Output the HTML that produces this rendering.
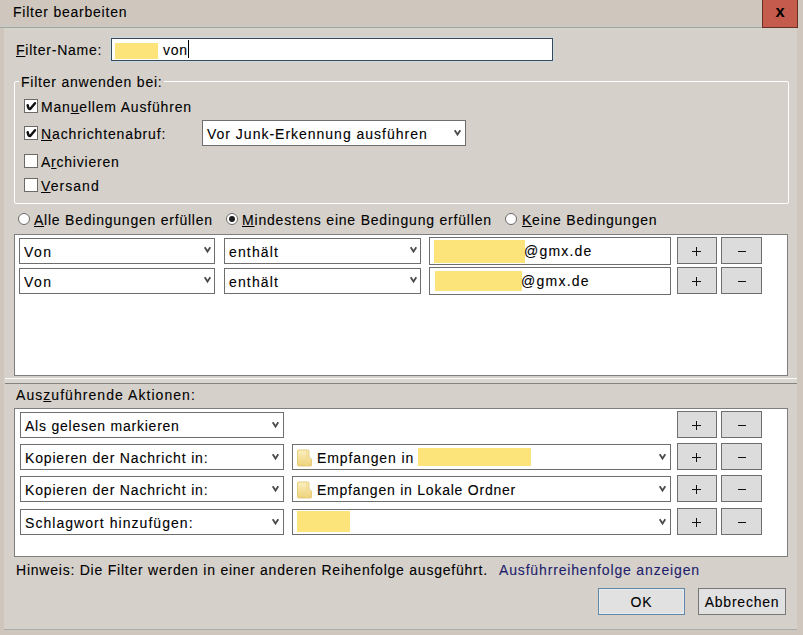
<!DOCTYPE html>
<html><head><meta charset="utf-8">
<style>
html,body{margin:0;padding:0}
body{width:803px;height:635px;position:relative;overflow:hidden;background:#cfc7bd;font-family:"Liberation Sans",sans-serif}
.a{position:absolute;box-sizing:border-box}
.t{position:absolute;font-size:14px;line-height:16px;letter-spacing:0.77px;color:#000;white-space:nowrap;-webkit-text-stroke:0.1px currentColor}
.u{text-decoration:underline;text-underline-offset:1px;text-decoration-thickness:1px}
.cb{position:absolute;width:14px;height:14px;box-sizing:border-box;border:1px solid #6d6a66;background:#fff}
.rd{position:absolute;width:12px;height:12px;box-sizing:border-box;border:1px solid #6a6a6a;border-radius:50%;background:#fff}
.ml{position:absolute;box-sizing:border-box;border:1px solid #6e6e6e;background:#fff;height:26px}
.tb{position:absolute;box-sizing:border-box;border:1px solid #6e6e6e;background:#fff;height:28px}
.bt{position:absolute;box-sizing:border-box;border:1px solid #6e6e6e;background:#dcdcdc;width:40px;height:27px}
.chev{position:absolute;width:10px;height:8px}
.yl{position:absolute;background:#fde47a}
.plus-h{position:absolute;left:14px;top:13px;width:9px;height:1px;background:#111}
.plus-v{position:absolute;left:18px;top:9px;width:1px;height:9px;background:#111}
.minus{position:absolute;left:16px;top:13px;width:8px;height:1px;background:#111}
</style></head><body>
<!-- content area -->
<div class="a" style="left:4px;top:28px;width:793px;height:601px;background:#d5d1ca"></div>
<div class="a" style="left:4px;top:629px;width:793px;height:1px;background:#a9adab"></div>
<!-- title -->
<div class="a" style="left:0;top:25px;width:762px;height:2px;background:#cac9c4"></div><div class="a" style="left:0;top:27px;width:762px;height:1px;background:#a4a6a2"></div><div class="a" style="left:4px;top:28px;width:758px;height:2px;background:#d6d3c8"></div>
<div class="t" style="left:13px;top:4px">Filter bearbeiten</div>
<div class="a" style="left:762px;top:0;width:36px;height:28px;background:#c45b4c;border:1px solid #6b2e26;border-top:none"></div>
<div class="a" style="left:773px;top:1px;width:14px;height:20px;font-size:16.5px;font-weight:bold;line-height:20px;color:#000;text-align:center">x</div>

<!-- filter name -->
<div class="t" style="left:16px;top:42px"><span class="u">F</span>ilter-Name:</div>
<div class="a" style="left:110px;top:37px;width:444px;height:25px;border:1px solid #c9d9e4"></div>
<div class="a" style="left:111px;top:38px;width:442px;height:23px;border:1px solid #3b4956;background:#fff"></div>
<div class="yl" style="left:115px;top:43px;width:43px;height:16px"></div>
<div class="t" style="left:163px;top:42px">von</div>
<div class="a" style="left:188px;top:40px;width:1px;height:18px;background:#000"></div>

<!-- groupbox -->
<div class="a" style="left:14px;top:81px;width:775px;height:123px;border:1px solid #fff;border-radius:2px"></div>
<div class="a" style="left:19px;top:78px;width:145px;height:6px;background:#d5d1ca"></div>
<div class="t" style="left:21px;top:74px">Filter anwenden bei:</div>

<div class="cb" style="left:24px;top:99px"></div>
<svg class="a" style="left:24px;top:99px" width="14" height="14" viewBox="0 0 14 14"><path d="M3.7 6.3 Q4.3 10.3 6.2 10.0 L11.0 4.3" fill="none" stroke="#111" stroke-width="2.5" stroke-linejoin="round" stroke-linecap="round"/></svg>
<div class="t" style="left:41px;top:99px;letter-spacing:0.81px">Man<span class="u">u</span>ellem Ausführen</div>

<div class="cb" style="left:24px;top:126px"></div>
<svg class="a" style="left:24px;top:126px" width="14" height="14" viewBox="0 0 14 14"><path d="M3.7 6.3 Q4.3 10.3 6.2 10.0 L11.0 4.3" fill="none" stroke="#111" stroke-width="2.5" stroke-linejoin="round" stroke-linecap="round"/></svg>
<div class="t" style="left:41px;top:126px;letter-spacing:0.87px"><span class="u">N</span>achrichtenabruf:</div>

<div class="ml" style="left:202px;top:120px;width:264px;height:26px"></div>
<div class="t" style="left:207px;top:126px;letter-spacing:0.99px">Vor Junk-Erkennung ausführen</div>
<svg class="chev" style="left:453px;top:129px" viewBox="0 0 10 8"><path d="M1.7 1.2 L4.5 5.5 L7.3 1.2" fill="none" stroke="#4a4a4a" stroke-width="1.8"/></svg>

<div class="cb" style="left:24px;top:154px"></div>
<div class="t" style="left:41px;top:154px">A<span class="u">r</span>chivieren</div>

<div class="cb" style="left:24px;top:178px"></div>
<div class="t" style="left:41px;top:178px;letter-spacing:1.05px"><span class="u">V</span>ersand</div>

<!-- radios -->
<div class="rd" style="left:18px;top:213px"></div>
<div class="t" style="left:34px;top:212px"><span class="u">A</span>lle Bedingungen erfüllen</div>
<div class="rd" style="left:226px;top:213px"></div>
<div class="a" style="left:229px;top:216px;width:6px;height:6px;border-radius:50%;background:#1c1c1c"></div>
<div class="t" style="left:242px;top:212px;letter-spacing:0.8px"><span class="u">M</span>indestens eine Bedingung erfüllen</div>
<div class="rd" style="left:505px;top:213px"></div>
<div class="t" style="left:522px;top:212px"><span class="u">K</span>eine Bedingungen</div>

<!-- conditions list -->
<div class="a" style="left:14px;top:234px;width:774px;height:142px;border:1px solid #7e7e7e;background:#fff"></div>

<div class="ml" style="left:19px;top:238px;width:196px"></div>
<div class="t" style="left:24px;top:244px;letter-spacing:1.5px">Von</div>
<svg class="chev" style="left:203px;top:246px" viewBox="0 0 10 8"><path d="M1.7 1.2 L4.5 5.5 L7.3 1.2" fill="none" stroke="#4a4a4a" stroke-width="1.8"/></svg>
<div class="ml" style="left:224px;top:238px;width:197px"></div>
<div class="t" style="left:229px;top:244px;letter-spacing:1.15px">enthält</div>
<svg class="chev" style="left:409px;top:246px" viewBox="0 0 10 8"><path d="M1.7 1.2 L4.5 5.5 L7.3 1.2" fill="none" stroke="#4a4a4a" stroke-width="1.8"/></svg>
<div class="tb" style="left:429px;top:237px;width:242px"></div>
<div class="yl" style="left:434px;top:240px;width:91px;height:23px"></div>
<div class="t" style="left:524px;top:243px;letter-spacing:1.19px">@gmx.de</div>
<div class="bt" style="left:677px;top:237px"><div class="plus-h"></div><div class="plus-v"></div></div>
<div class="bt" style="left:721px;top:237px;width:41px"><div class="minus"></div></div>

<div class="ml" style="left:19px;top:268px;width:196px"></div>
<div class="t" style="left:24px;top:274px;letter-spacing:1.5px">Von</div>
<svg class="chev" style="left:203px;top:276px" viewBox="0 0 10 8"><path d="M1.7 1.2 L4.5 5.5 L7.3 1.2" fill="none" stroke="#4a4a4a" stroke-width="1.8"/></svg>
<div class="ml" style="left:224px;top:268px;width:197px"></div>
<div class="t" style="left:229px;top:274px;letter-spacing:1.15px">enthält</div>
<svg class="chev" style="left:409px;top:276px" viewBox="0 0 10 8"><path d="M1.7 1.2 L4.5 5.5 L7.3 1.2" fill="none" stroke="#4a4a4a" stroke-width="1.8"/></svg>
<div class="tb" style="left:429px;top:267px;width:242px"></div>
<div class="yl" style="left:435px;top:271px;width:87px;height:20px"></div>
<div class="t" style="left:521px;top:273px;letter-spacing:1.25px">@gmx.de</div>
<div class="bt" style="left:677px;top:267px"><div class="plus-h"></div><div class="plus-v"></div></div>
<div class="bt" style="left:721px;top:267px;width:41px"><div class="minus"></div></div>

<!-- splitter -->
<div class="a" style="left:5px;top:378px;width:792px;height:1px;background:#fbfbfa"></div>
<div class="a" style="left:5px;top:379px;width:792px;height:4px;background:#d9d6d1"></div>
<div class="a" style="left:5px;top:383px;width:792px;height:1px;background:#85837f"></div>

<div class="t" style="left:16px;top:387px;letter-spacing:1.05px">Aus<span class="u">z</span>uführende Aktionen:</div>

<!-- actions list -->
<div class="a" style="left:14px;top:408px;width:774px;height:149px;border:1px solid #7e7e7e;background:#fff"></div>

<div class="ml" style="left:20px;top:412px;width:264px"></div>
<div class="t" style="left:25px;top:418px">Als gelesen markieren</div>
<svg class="chev" style="left:271px;top:421px" viewBox="0 0 10 8"><path d="M1.7 1.2 L4.5 5.5 L7.3 1.2" fill="none" stroke="#4a4a4a" stroke-width="1.8"/></svg>
<div class="bt" style="left:677px;top:411px"><div class="plus-h"></div><div class="plus-v"></div></div>
<div class="bt" style="left:721px;top:411px;width:41px"><div class="minus"></div></div>
<div class="ml" style="left:20px;top:444px;width:264px"></div>
<div class="t" style="left:25px;top:450px;letter-spacing:0.83px">Kopieren der Nachricht in:</div>
<svg class="chev" style="left:271px;top:453px" viewBox="0 0 10 8"><path d="M1.7 1.2 L4.5 5.5 L7.3 1.2" fill="none" stroke="#4a4a4a" stroke-width="1.8"/></svg>
<div class="ml" style="left:292px;top:444px;width:379px"></div>
<svg class="chev" style="left:658px;top:453px" viewBox="0 0 10 8"><path d="M1.7 1.2 L4.5 5.5 L7.3 1.2" fill="none" stroke="#4a4a4a" stroke-width="1.8"/></svg>
<svg class="a" style="left:297px;top:449px" width="16" height="18" viewBox="0 0 16 18"><defs><linearGradient id="fg449" x1="0" y1="0" x2="0" y2="1"><stop offset="0" stop-color="#fcf0c0"/><stop offset="1" stop-color="#ecd27a"/></linearGradient></defs><path d="M1.5 1 H11 Q12 1 12 2 V8 L14.5 10 V16 Q14.5 17 13.5 17 H1.5 Q0.5 17 0.5 16 V2 Q0.5 1 1.5 1 Z" fill="url(#fg449)" stroke="#e0c46a" stroke-width="0.8"/><path d="M9.5 2 V16.5" stroke="#f3dc8f" stroke-width="1"/></svg>
<div class="t" style="left:317px;top:450px;letter-spacing:0.9px">Empfangen in</div>
<div class="yl" style="left:418px;top:448px;width:113px;height:18px"></div>
<div class="bt" style="left:677px;top:443px"><div class="plus-h"></div><div class="plus-v"></div></div>
<div class="bt" style="left:721px;top:443px;width:41px"><div class="minus"></div></div>
<div class="ml" style="left:20px;top:476px;width:264px"></div>
<div class="t" style="left:25px;top:482px;letter-spacing:0.83px">Kopieren der Nachricht in:</div>
<svg class="chev" style="left:271px;top:485px" viewBox="0 0 10 8"><path d="M1.7 1.2 L4.5 5.5 L7.3 1.2" fill="none" stroke="#4a4a4a" stroke-width="1.8"/></svg>
<div class="ml" style="left:292px;top:476px;width:379px"></div>
<svg class="chev" style="left:658px;top:485px" viewBox="0 0 10 8"><path d="M1.7 1.2 L4.5 5.5 L7.3 1.2" fill="none" stroke="#4a4a4a" stroke-width="1.8"/></svg>
<svg class="a" style="left:297px;top:481px" width="16" height="18" viewBox="0 0 16 18"><defs><linearGradient id="fg481" x1="0" y1="0" x2="0" y2="1"><stop offset="0" stop-color="#fcf0c0"/><stop offset="1" stop-color="#ecd27a"/></linearGradient></defs><path d="M1.5 1 H11 Q12 1 12 2 V8 L14.5 10 V16 Q14.5 17 13.5 17 H1.5 Q0.5 17 0.5 16 V2 Q0.5 1 1.5 1 Z" fill="url(#fg481)" stroke="#e0c46a" stroke-width="0.8"/><path d="M9.5 2 V16.5" stroke="#f3dc8f" stroke-width="1"/></svg>
<div class="t" style="left:317px;top:482px">Empfangen in Lokale Ordner</div>
<div class="bt" style="left:677px;top:475px"><div class="plus-h"></div><div class="plus-v"></div></div>
<div class="bt" style="left:721px;top:475px;width:41px"><div class="minus"></div></div>
<div class="ml" style="left:20px;top:509px;width:264px"></div>
<div class="t" style="left:25px;top:515px;letter-spacing:1.05px">Schlagwort hinzufügen:</div>
<svg class="chev" style="left:271px;top:518px" viewBox="0 0 10 8"><path d="M1.7 1.2 L4.5 5.5 L7.3 1.2" fill="none" stroke="#4a4a4a" stroke-width="1.8"/></svg>
<div class="ml" style="left:292px;top:509px;width:379px"></div>
<svg class="chev" style="left:658px;top:518px" viewBox="0 0 10 8"><path d="M1.7 1.2 L4.5 5.5 L7.3 1.2" fill="none" stroke="#4a4a4a" stroke-width="1.8"/></svg>
<div class="yl" style="left:297px;top:511px;width:53px;height:21px"></div>
<div class="bt" style="left:677px;top:508px"><div class="plus-h"></div><div class="plus-v"></div></div>
<div class="bt" style="left:721px;top:508px;width:41px"><div class="minus"></div></div>

<!-- footer -->
<div class="t" style="left:16px;top:562px">Hinweis: Die Filter werden in einer anderen Reihenfolge ausgeführt.</div>
<div class="t" style="left:499px;top:562px;color:#1d1d6c;letter-spacing:0.84px">Ausführreihenfolge anzeigen</div>
<div class="a" style="left:598px;top:588px;width:87px;height:27px;border:1px solid #6287a6;background:#e1e1e1;box-shadow:inset 0 0 0 1px #e6edf2"></div>
<div class="t" style="left:598px;top:594px;width:87px;text-align:center">OK</div>
<div class="a" style="left:698px;top:588px;width:88px;height:27px;border:1px solid #777777;background:#e1e1e1"></div>
<div class="t" style="left:698px;top:594px;width:88px;text-align:center">Abbrechen</div>
</body></html>
